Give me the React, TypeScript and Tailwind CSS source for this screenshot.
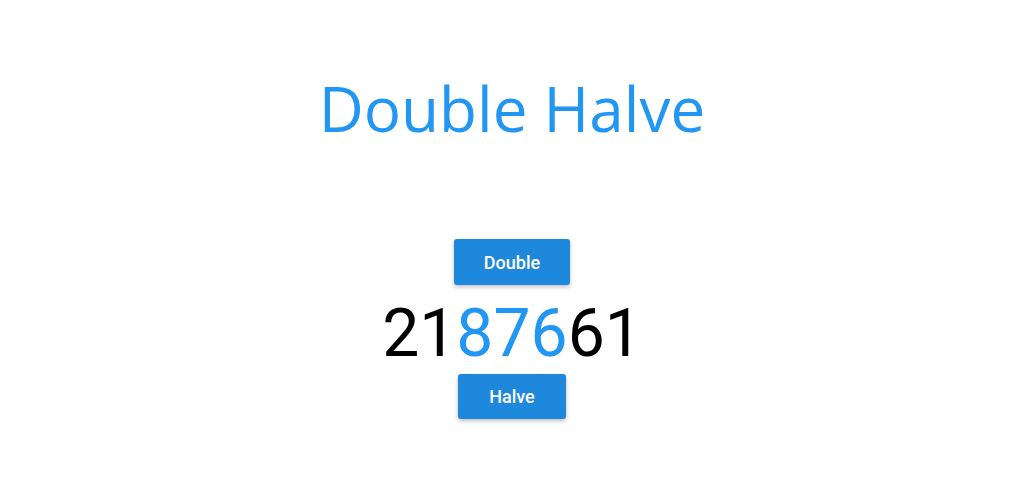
export default function App() {
  const digits = [
    { d: "2", hi: false },
    { d: "1", hi: false },
    { d: "8", hi: true },
    { d: "7", hi: true },
    { d: "6", hi: true },
    { d: "6", hi: false },
    { d: "1", hi: false },
  ]

  return (
    <div className="flex h-[500px] w-[1024px] flex-col items-center bg-white">
      <h1 className="mt-[68px] text-[62px] leading-[80px] text-[#2196f3] [font-family:'Open_Sans',sans-serif]">
        Double Halve
      </h1>

      <div className="mt-[91px] flex flex-col items-center [font-family:Roboto,sans-serif]">
        <button className="h-[46px] rounded-[3px] bg-[#1e88dd] px-[30px] text-[18px] font-medium text-white shadow-[0_2px_4px_rgba(0,0,0,0.25)]">
          Double
        </button>
        <div className="mt-[9px] text-[66px] leading-[80px] text-black">
          {digits.map((x, i) => (
            <span key={i} className={x.hi ? "text-[#2196f3]" : ""}>
              {x.d}
            </span>
          ))}
        </div>
        <button className="h-[45px] rounded-[3px] bg-[#1e88dd] px-[31px] text-[18px] font-medium text-white shadow-[0_2px_4px_rgba(0,0,0,0.25)]">
          Halve
        </button>
      </div>
    </div>
  )
}
